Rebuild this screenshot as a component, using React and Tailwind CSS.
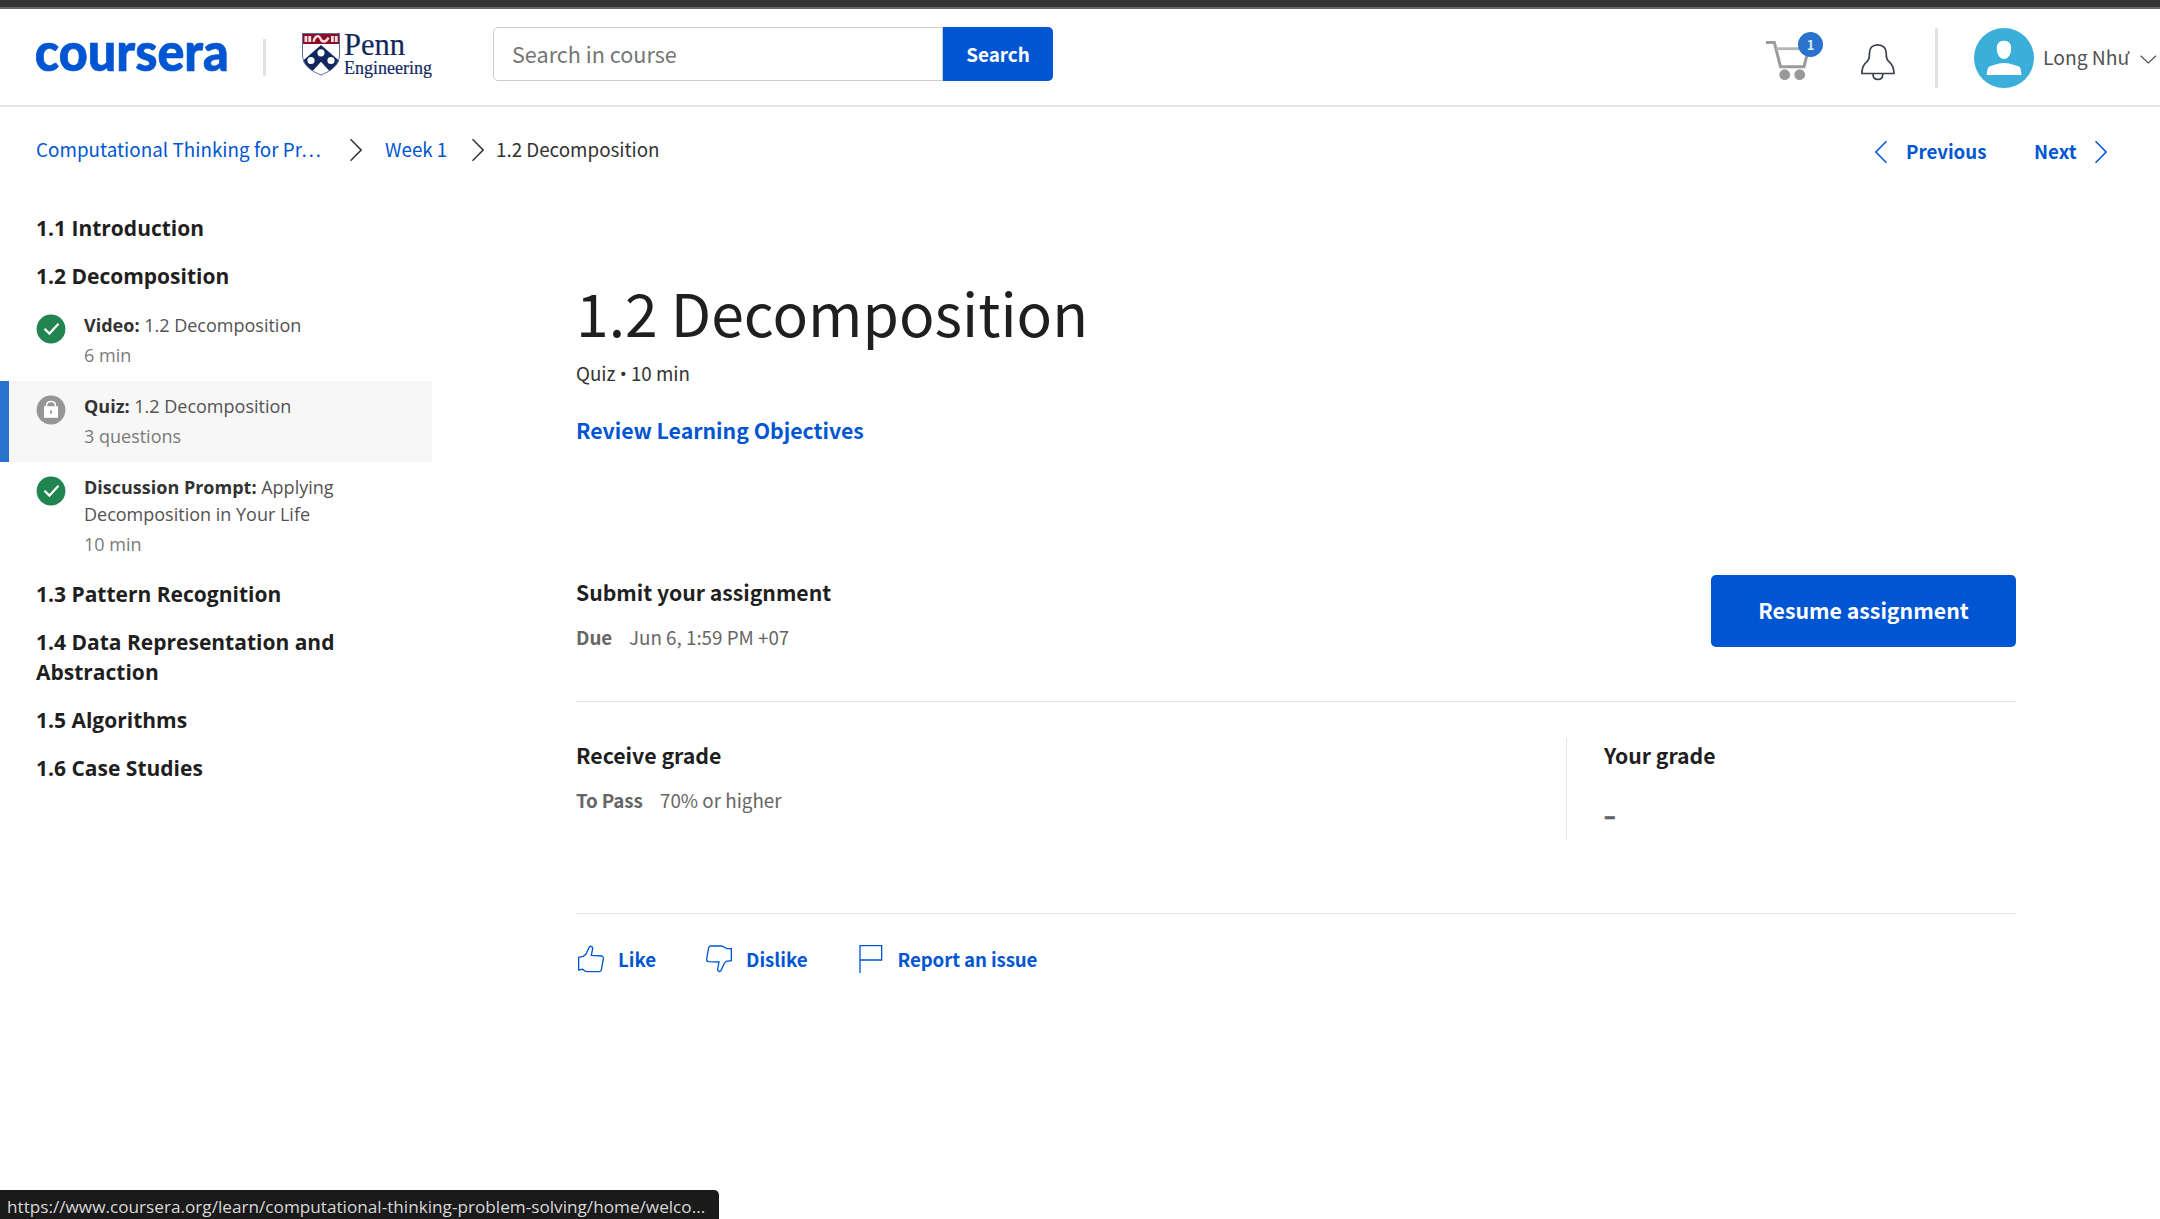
import React from 'react';

function CourseraLogo() {
  return (
    <svg className="ml-[34px] mt-[5px] h-[80px] w-[196px] shrink-0 overflow-visible" viewBox="0 0 196 80">
      <text x="0.800" y="56.700" textLength="194" lengthAdjust="spacingAndGlyphs" fontFamily="Lato, sans-serif" fontWeight="900" fontSize="53" fill="#0056d2" stroke="#0056d2" strokeWidth="0.700">
        coursera
      </text>
    </svg>
  );
}

function PennLogo() {
  return (
    <div className="ml-[35px] mt-[22px] flex h-[60px] w-[134px] shrink-0">
      <svg className="h-[52px] w-[43px] shrink-0" viewBox="0 0 43 52">
        <defs>
          <clipPath id="shield">
            <path d="M1 2H39V24C39 34 30 40 20 44.500C10 40 1 34 1 24Z" />
          </clipPath>
        </defs>
        <path d="M1.500 2.500H38.500V24C38.500 34 30 40 20 44C10 40 1.500 34 1.500 24Z" fill="#fff" />
        <g clipPath="url(#shield)">
          <rect x="0" y="2" width="40" height="11" fill="#8f0a24" />
          <path d="M-2 33L20 14L42 33L31.500 43.500L20 30.800L8.500 43.500Z" fill="#11285f" />
          <circle cx="20" cy="21.800" r="3.600" fill="#fff" />
          <circle cx="10" cy="29.500" r="3.600" fill="#fff" />
          <circle cx="30" cy="29.500" r="3.600" fill="#fff" />
        </g>
        <path d="M3.500 5H6.300V11H3.500ZM7.300 5H10.200V11H7.300ZM30 5H32.800V11H30ZM33.800 5H36.700V11H33.800Z" fill="#f1dfe2" />
        <path d="M12.500 10.800C14 4.500 18 4 19.500 7.500C21 11.500 25 12 27.500 6.500" fill="none" stroke="#f1dfe2" strokeWidth="2.400" />
        <path d="M1.500 2.500H38.500V24C38.500 34 30 40 20 44C10 40 1.500 34 1.500 24Z" fill="none" stroke="#5d6f95" strokeWidth="1" />
      </svg>
      <svg className="h-[60px] w-[91px] shrink-0 overflow-visible" viewBox="0 0 91 60" fill="#11285f" stroke="#11285f" strokeWidth="0.200" fontFamily="Liberation Serif, serif">
        <text x="0" y="24.300" textLength="61" lengthAdjust="spacingAndGlyphs" fontSize="32">
          Penn
        </text>
        <text x="0" y="42.700" textLength="88" lengthAdjust="spacingAndGlyphs" fontSize="19.500">
          Engineering
        </text>
      </svg>
    </div>
  );
}

function Chevron({ left, className }) {
  return (
    <svg className={`h-6 w-3 shrink-0 ${className}`} viewBox="0 0 12 24" fill="none" stroke="currentColor" strokeWidth="1.500">
      <path d={left ? 'M11.500 1.200L0.900 12L11.500 22.800' : 'M0.500 1.200L11.100 12L0.500 22.800'} />
    </svg>
  );
}

function Cart() {
  return (
    <div className="relative ml-[713px] mt-[23px] h-[50px] w-[58px] shrink-0">
      <svg className="h-[50px] w-[46px]" viewBox="0 0 46 50" fill="none">
        <path d="M0 10.400H8.300L14.500 34.700H38L42 19" stroke="#9c9c9c" strokeWidth="3" />
        <path d="M10 16.700H36" stroke="#b3b3b3" strokeWidth="2.800" />
        <circle cx="18.700" cy="42.700" r="5.400" fill="#999" />
        <circle cx="33.700" cy="42.700" r="5.400" fill="#999" />
      </svg>
      <div className='absolute left-8 top-0 flex h-[25px] w-[25px] items-center justify-center rounded-full bg-[#2a73cc] pb-px font-["Noto_Sans_CJK_SC",sans-serif] text-[13px] font-bold leading-none text-[#dfeaf8]'>
        1
      </div>
    </div>
  );
}

function Bell() {
  return (
    <svg className="ml-[36px] mt-[34px] h-[38px] w-[36px] shrink-0" viewBox="0 0 36 38" fill="none" stroke="#3a414b" strokeWidth="1.700">
      <path d="M17.700 1.800C12.200 1.800 9.500 5.400 9.500 10C9.500 17.500 7.700 17.500 4.700 21C2.100 24.200 1.900 26 1.900 30.500H33.900C33.900 26 33.700 24.200 31.100 21C28.100 17.500 26.200 17.500 26.200 10C26.200 5.400 23.200 1.800 17.700 1.800Z" />
      <path d="M13 31C13 34.500 15.100 36.500 17.900 36.500S22.800 34.500 22.800 31" />
    </svg>
  );
}

function Avatar() {
  return (
    <svg className="ml-9 mt-[19px] h-[60px] w-[60px] shrink-0" viewBox="0 0 60 60">
      <circle cx="30" cy="30" r="30" fill="#3bafda" />
      <path d="M30 12.700C34.700 12.700 37.300 15.600 37.200 20.500C37.100 26.500 34 31 30 31S22.900 26.500 22.800 20.500C22.700 15.600 25.300 12.700 30 12.700Z" fill="#fff" />
      <path d="M12.700 47C12.900 43.500 13.500 40.500 15 38.700C18 37.200 22 37 25 35.600Q30 34.500 35 35.600C38 37 42 37.200 45.500 38.700C46.800 40.500 47.300 43.500 47.400 47Z" fill="#fff" />
    </svg>
  );
}

function StatusIcon({ locked }) {
  return (
    <svg className="mr-[18px] mt-[2px] h-[30px] w-[30px] shrink-0" viewBox="-0.500 0 30 30">
      <circle cx="14.500" cy="15" r="14.400" fill={locked ? '#969696' : '#208551'} />
      {locked ? (
        <>
          <path d="M10.100 11.500V10.200C10.100 7.800 12 6.400 14.500 6.400S18.900 7.800 18.900 10.200V11.500" fill="none" stroke="#fff" strokeWidth="1.500" />
          <path d="M7.500 11.200H21.500V22.800H7.500Z" fill="#fff" />
          <path d="M13.600 15.500H15.400V18.800H13.600Z" fill="#969696" />
        </>
      ) : (
        <path d="M8 14.700L12.900 19.600L22 9.700" fill="none" stroke="#fff" strokeWidth="2.200" />
      )}
    </svg>
  );
}

function Heading({ children }) {
  return (
    <h2 className="py-[9px] pl-9 pr-[60px] text-[21px] font-bold leading-[30px] text-[#1f1f1f]">
      {children}
    </h2>
  );
}

function Item({ kind, title, meta, locked }) {
  return (
    <div className={locked ? 'flex border-l-[9px] border-[#2a73cc] bg-[#f7f7f7] py-3 pl-[27px]' : 'flex py-3 pl-9'}>
      <StatusIcon locked={locked} />
      <div className="w-[275px] text-[18px] leading-[27px] text-[#525252]">
        <div>
          <span className="font-bold text-[#333]">{kind}:</span> {title}
        </div>
        <div className="mt-[3px] text-[#7a7a7a]">{meta}</div>
      </div>
    </div>
  );
}

function Action({ label, children, className }) {
  return (
    <button className={`flex items-center text-[18.700px] font-bold leading-7 text-[#0056d2] ${className || ''}`}>
      {children}
      <span>{label}</span>
    </button>
  );
}

export default function App() {
  return (
    <div className='relative h-[1219px] w-[2160px] overflow-hidden bg-white whitespace-nowrap font-["Noto_Sans_CJK_SC",sans-serif] text-[#1f1f1f]'>
      <div className="h-[9px] border-b-2 border-[#666] bg-[#333]" />
      <header className="flex h-[98px] items-start border-b-2 border-[#e3e3e3]">
        <CourseraLogo />
        <div className="ml-[33px] mt-[30px] h-[37px] w-[3px] shrink-0 bg-[#e1e1e1]" />
        <PennLogo />
        <div className="ml-[58px] mt-[18px] flex h-[54px] shrink-0">
          <div className="h-[54px] w-[450px] rounded-l-[5px] border border-[#c7ccd6] pl-[18px] text-[21.600px] leading-[51px] text-[#757575]">
            Search in course
          </div>
          <button className="h-[54px] w-[110px] rounded-r-[5px] bg-[#0056d2] pb-px text-[18.900px] font-bold leading-[51px] text-white">
            Search
          </button>
        </div>
        <Cart />
        <Bell />
        <div className="ml-[39px] mt-[19px] h-[60px] w-[3px] shrink-0 bg-[#e1e1e1]" />
        <Avatar />
        <span className="ml-[9px] mt-[34px] w-[97px] shrink-0 text-[19.300px] leading-[28px] text-[#525252]">Long Như</span>
        <svg className="mt-[46px] h-[9px] w-[17px] shrink-0" viewBox="0 0 17 9" fill="none" stroke="#525252" strokeWidth="1.200">
          <path d="M0.600 0.800L8.300 8L16 0.800" />
        </svg>
      </header>

      <nav className="flex h-[97px] items-start pt-[28px] text-[18.800px] leading-7">
        <a className="ml-9 w-[314px] tracking-[0.040px] text-[#0056d2]">Computational Thinking for Pr…</a>
        <Chevron className="mt-[3px] text-[#333]" />
        <a className="ml-[23px] w-[87px] text-[#0056d2]">Week 1</a>
        <Chevron className="mt-[3px] text-[#333]" />
        <span className="ml-[12px] w-[1379px] text-[#333]">1.2 Decomposition</span>
        <div className="flex pt-[2px] font-bold text-[#0056d2]">
          <Chevron left className="mt-[3px]" />
          <span className="ml-[19px] w-[128px] text-[18.700px]">Previous</span>
          <span className="w-[61px]">Next</span>
          <Chevron className="mt-[3px]" />
        </div>
      </nav>

      <div className="flex items-start">
        <aside className='w-[432px] shrink-0 whitespace-normal font-["Open_Sans",sans-serif]'>
          <Heading>1.1 Introduction</Heading>
          <Heading>1.2 Decomposition</Heading>
          <Item kind="Video" title="1.2 Decomposition" meta="6 min" />
          <Item kind="Quiz" title="1.2 Decomposition" meta="3 questions" locked />
          <Item kind="Discussion Prompt" title="Applying Decomposition in Your Life" meta="10 min" />
          <Heading>1.3 Pattern Recognition</Heading>
          <Heading>1.4 Data Representation and Abstraction</Heading>
          <Heading>1.5 Algorithms</Heading>
          <Heading>1.6 Case Studies</Heading>
        </aside>

        <main className="ml-36 w-[1440px] shrink-0 pt-[72px]">
          <h1 className="text-[58.800px] leading-[72px]">1.2 Decomposition</h1>
          <div className="mt-[11px] h-7 text-[18.800px] leading-7 text-[#333]">
            Quiz <span className='font-["Open_Sans",sans-serif] leading-none'>•</span> 10 min
          </div>
          <a className="mt-7 block text-[21.250px] font-bold leading-[30px] text-[#0056d2]">Review Learning Objectives</a>

          <section className="mt-[130px] flex h-[127px] justify-between border-b border-[#e5e5e5]">
            <div className="pt-[2px]">
              <h3 className="text-[21.200px] font-bold leading-[30px]">Submit your assignment</h3>
              <div className="mt-[16px] flex text-[18.800px] leading-7 text-[#666]">
                <span className="w-[53px] font-bold">Due</span>
                <span>Jun 6, 1:59 PM +07</span>
              </div>
            </div>
            <button className="h-[72px] w-[305px] rounded-[5px] bg-[#0056d2] text-[21.300px] font-bold leading-[70px] text-white">
              <span className="relative -top-px">Resume assignment</span>
            </button>
          </section>

          <section className="flex h-[212px] items-start justify-between border-b border-[#e5e5e5] pt-9">
            <div className="pt-[2px]">
              <h3 className="text-[21.300px] font-bold leading-[30px]">Receive grade</h3>
              <div className="mt-[16px] flex text-[18.800px] leading-7 text-[#666]">
                <span className="w-[84px] font-bold tracking-[-0.150px]">To Pass</span>
                <span>70% or higher</span>
              </div>
            </div>
            <div className="h-[102px] w-[450px] border-l border-[#e5e5e5] pl-[37px] pt-[2px]">
              <h3 className="text-[21.200px] font-bold leading-[30px]">Your grade</h3>
              <div className="mt-[30px] text-[21.200px] font-black leading-[30px] text-[#636363] [-webkit-text-stroke:0.600px_#636363]">–</div>
            </div>
          </section>

          <div className="mt-[31px] flex h-7 items-center">
            <Action label="Like">
              <svg className="mr-[12px] h-[30px] w-[30px]" viewBox="48 130 90 90" fill="none" stroke="currentColor" strokeWidth="4">
                <path d="M56 170L70 167L78 160L88 139Q92 135 96 138Q98 140 98 144L94 164L126 166Q131 168 130 174L124 208Q122 213 117 213H82Q76 213 68 206L56 208Z" />
              </svg>
            </Action>
            <Action label="Dislike" className="ml-[48px]">
              <svg className="mr-[12px] h-[30px] w-[30px]" viewBox="433 134 90 90" fill="none" stroke="currentColor" strokeWidth="4">
                <path d="M515 148V184L500 186L494 192L484 213Q480 219 476 215Q474 213 474 209L478 188L446 187Q440 185 441 179L447 145Q449 140 454 140H486L502 148Z" />
              </svg>
            </Action>
            <Action label="Report an issue" className="ml-[48px] tracking-[-0.120px]">
              <svg className="mr-[12px] h-[30px] w-[30px]" viewBox="886 130 90 90" fill="none" stroke="currentColor" strokeWidth="4">
                <path d="M898 217V135H963V178H898" />
              </svg>
            </Action>
          </div>
        </main>
      </div>

      <div className='absolute bottom-0 left-0 h-[29px] w-[719px] rounded-tr-[5px] bg-[#1a1a1a] pl-[7px] pt-[4px] font-["Open_Sans",sans-serif] text-[17.180px] leading-[26px] text-[#d8d8d8]'>
        https://www.coursera.org/learn/computational-thinking-problem-solving/home/welco...
      </div>
    </div>
  );
}
